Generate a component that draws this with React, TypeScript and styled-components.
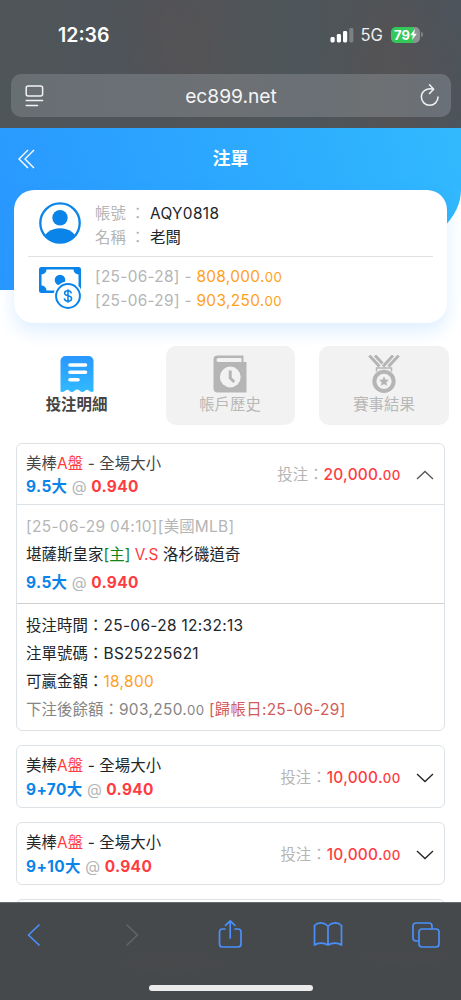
import React from 'react';
import styled, { createGlobalStyle } from 'styled-components';

const Global = createGlobalStyle`
  *, *::before, *::after { box-sizing: border-box; }
  body {
    margin: 0;
    background: #fff;
    color: #212529;
    font-family: Inter, "Noto Sans CJK TC", sans-serif;
    font-size: 15.4px;
  }
  svg { display: block; flex: none; }
`;

const Screen = styled.div`
  width: 461px;
  height: 1000px;
  display: flex;
  flex-direction: column;
  overflow: hidden;
`;

const BrowserTop = styled.header`
  height: 128px;
  flex: none;
  color: #fff;
  background:
    radial-gradient(circle at 165px 15px, #57525480, transparent 70px),
    radial-gradient(circle at 175px 60px, #57525480, transparent 60px),
    radial-gradient(circle at 400px 75px, #57525480, transparent 80px),
    linear-gradient(90deg, #4f5658, #4e545a 30%, #525457 45%, #4d565a 65%, #525356 85%, #4c545c);
`;

const StatusBar = styled.div`
  height: 74px;
  padding: 0 38px 5px 58px;
  display: flex;
  align-items: center;
`;

const Clock = styled.span`
  flex: 1;
  font-size: 19.5px;
  font-weight: 600;
  line-height: 24px;
`;

const Signal = styled.div`
  display: flex;
  align-items: center;
`;

const Network = styled.span`
  font-size: 16.6px;
  line-height: 22px;
  margin: 0 8px 0 7px;
  color: #eeeff0;
`;

const Battery = styled.div`
  width: 29px;
  height: 16px;
  border-radius: 5px;
  display: flex;
  align-items: center;
  justify-content: center;
  font-size: 13px;
  font-weight: 700;
  background: linear-gradient(90deg, #34c759 80%, #8d9194 80%);
`;

const BatteryTip = styled.i`
  width: 2px;
  height: 5px;
  margin-left: 1px;
  border-radius: 0 2px 2px 0;
  background: #7e8386;
`;

const AddressBar = styled.div`
  height: 43px;
  margin: 0 10px 0 11px;
  padding: 0 11px 0 14px;
  display: flex;
  align-items: center;
  justify-content: space-between;
  border-radius: 10px;
  background: linear-gradient(90deg, #686f73, #6a7075 30%, #6e7073 50%, #697076 68%, #6e7072 82%, #6a7078);
`;

const Address = styled.span`
  font-size: 19.2px;
  line-height: 24px;
  margin-right: 2px;
  color: #f4f5f5;
`;

const Page = styled.main`
  height: 774px;
  flex: none;
  overflow: hidden;
`;

const Hero = styled.div`
  height: 162px;
  border-bottom-right-radius: 240px 100px;
  background: linear-gradient(75deg, #2997ff, #2ca8ff 50%, #31b9fd);
`;

const TitleBar = styled.div`
  height: 62px;
  padding: 0 18px;
  display: grid;
  grid-template-columns: 24px 1fr 24px;
  align-items: center;
  color: #fff;
`;

const Title = styled.h1`
  margin: 0;
  text-align: center;
  font-size: 18px;
  font-weight: 700;
  line-height: 24px;
`;

const AccountCard = styled.section`
  height: 133px;
  margin: -100px 14px 0 14px;
  padding: 0 14px;
  position: relative;
  border-radius: 20px;
  background: #fff;
  box-shadow: 0 8px 18px #2598ff28;
`;

const AccountRow = styled.div<{ $height: number }>`
  height: ${p => p.$height}px;
  padding-left: 11px;
  display: flex;
  align-items: center;
  gap: 14px;
  & + & { border-top: 1px solid #dee2e2; }
`;

const AccountLines = styled.div`
  padding-top: 5px;
  line-height: 23.5px;
  color: #212529;
`;

const BalanceLines = styled(AccountLines)`
  padding-top: 2px;
  letter-spacing: 0.3px;
`;

const Muted = styled.span`
  color: #b5b5b5;
`;

const Latin = styled.span`
  letter-spacing: 0.35px;
`;

const AccountField = styled.div`
  display: grid;
  grid-template-columns: 35px 20px auto;
`;

const Gold = styled(Latin)`
  color: #ff9f1a;
`;

const Cents = styled.small`
  font-size: 0.86em;
`;

const Tabs = styled.nav`
  display: grid;
  grid-template-columns: 129px 129px 130px;
  gap: 24.5px;
  padding: 23px 12px 0;
`;

const Tab = styled.div<{ $active?: boolean }>`
  height: 79px;
  padding-top: 9px;
  display: flex;
  flex-direction: column;
  align-items: center;
  border-radius: 10px;
  line-height: 24px;
  font-weight: ${p => (p.$active ? 700 : 400)};
  color: ${p => (p.$active ? '#444' : '#b8b8b8')};
  background: ${p => (p.$active ? 'transparent' : '#f2f2f2')};
`;

const BetList = styled.div`
  padding: 18px 16px 0;
  display: flex;
  flex-direction: column;
  gap: 14px;
`;

const BetCard = styled.article`
  flex: none;
  min-height: 63px;
  border: 1px solid #dde2e6;
  border-radius: 6px;
  background: #fff;
`;

const BetHeader = styled.div<{ $open?: boolean }>`
  height: ${p => (p.$open ? 60 : 61)}px;
  padding: 2px 10px 0 9px;
  display: flex;
  align-items: center;
  justify-content: space-between;
  color: ${p => (p.$open ? '#444' : '#212529')};
`;

const BetName = styled.div`
  line-height: 23.5px;
  letter-spacing: 0.1px;
`;

const Stake = styled.div`
  display: flex;
  align-items: center;
  line-height: 24px;
  svg { margin-left: 15.5px; }
`;

const Amount = styled(Latin)`
  color: #ff3b3f;
  font-weight: 500;
  letter-spacing: 0.28px;
`;

const Red = styled.span`
  color: #ff3b3f;
`;

const Green = styled.span`
  color: #148414;
`;

const Rose = styled.span`
  color: #d25b5b;
  letter-spacing: 0.3px;
`;

const Pick = styled.b`
  color: #0a84e8;
  font-weight: 700;
  letter-spacing: 0.4px;
`;

const Odds = styled.b`
  color: #ff3b3f;
  font-weight: 700;
  letter-spacing: 0.35px;
`;

const Section = styled.div<{ $divider: string; $top: number; $bottom: number }>`
  padding: ${p => p.$top}px 9px ${p => p.$bottom}px;
  border-top: 1px solid ${p => p.$divider};
  line-height: 28px;
  letter-spacing: 0.1px;
  white-space: nowrap;
`;

const Gray = styled.div`
  color: #858585;
`;

const BrowserBottom = styled.footer`
  flex: 1;
  padding-top: 15px;
  border-top: 1px solid #6a6d6f;
  background:
    radial-gradient(ellipse at 170px 60px, #4b484a90, transparent 80px),
    radial-gradient(ellipse at 405px 55px, #4b484a90, transparent 70px),
    #45494c;
`;

const Toolbar = styled.div`
  height: 34px;
  padding: 0 20px 0 19px;
  display: flex;
  align-items: center;
  justify-content: space-between;
`;

const HomeIndicator = styled.div`
  width: 164px;
  height: 6px;
  margin: 33px auto 0;
  border-radius: 3px;
  background: #ececec;
`;

const ReaderIcon = () => (
  <svg width="19" height="22" viewBox="0 0 19 22" fill="none" stroke="#f2f2f2" strokeWidth="1.5" strokeLinecap="round">
    <rect x="1.2" y="1" width="16.4" height="10" rx="2" />
    <path d="M1.2 15.5H17.6M1.2 20.5H12.5" />
  </svg>
);

const ReloadIcon = () => (
  <svg width="20" height="24" viewBox="0 0 20 24" fill="none" stroke="#f2f2f2" strokeWidth="1.5" strokeLinecap="round" strokeLinejoin="round">
    <path d="M13.300 5.200C6.500 3.400 1.400 7.600 1.400 13a8.300 8.300 0 0 0 16.600 0M9.500.8l4.200 4.500-4.200 4.200" />
  </svg>
);

const SignalIcon = () => (
  <svg width="24" height="16" viewBox="0 0 24 16" fill="#fff">
    <rect x="0.5" y="10" width="4.2" height="5.5" rx="1.4" />
    <rect x="6.8" y="7" width="4.2" height="8.5" rx="1.4" />
    <rect x="13" y="4" width="4.2" height="11.5" rx="1.4" />
    <rect x="19.2" y="1" width="4.2" height="14.5" rx="1.4" fill="#7c8082" />
  </svg>
);

const BoltIcon = () => (
  <svg width="7" height="11" viewBox="0 0 7 11" fill="#fff">
    <path d="M5 0 .2 6.2h2.7L2 11l4.8-6.3H4.100z" />
  </svg>
);

const BackIcon = () => (
  <svg width="18" height="20" viewBox="0 0 18 20" fill="none" stroke="#fff" strokeWidth="1.4">
    <path d="M10 1 1 10l9 9M16 1 7 10l9 9" />
  </svg>
);

const PersonIcon = () => (
  <svg width="42" height="42" viewBox="0 0 42 42">
    <defs>
      <clipPath id="avatar"><circle cx="21" cy="21" r="20" /></clipPath>
    </defs>
    <circle cx="21" cy="15.700" r="7.700" fill="#0a84e8" />
    <ellipse cx="21" cy="38.500" rx="16.500" ry="12.300" fill="#0a84e8" clipPath="url(#avatar)" />
    <circle cx="21" cy="21" r="19.700" fill="none" stroke="#0a84e8" strokeWidth="2.300" />
  </svg>
);

const MoneyIcon = () => (
  <svg width="42" height="42" viewBox="0 0 42 42">
    <rect width="42" height="26" rx="2.500" fill="#0a84e8" />
    <path d="M7.500 2.500h27a5 5 0 0 0 5 5v11a5 5 0 0 0-5 5h-27a5 5 0 0 0-5-5v-11a5 5 0 0 0 5-5z" fill="#fff" />
    <circle cx="21" cy="13" r="5.300" fill="#0a84e8" />
    <circle cx="29" cy="29" r="14.500" fill="#fff" />
    <circle cx="29" cy="29" r="11.900" fill="#fff" stroke="#0a84e8" strokeWidth="2" />
    <path d="M32.300 26.300c-.3-1.700-1.600-2.500-3.400-2.500-2 0-3.300 1-3.300 2.500 0 3.600 7 1.500 7 5.200 0 1.700-1.500 2.700-3.500 2.700-2.200 0-3.600-1-3.800-2.800M29 22.300v13.400" fill="none" stroke="#0a84e8" strokeWidth="1.500" />
  </svg>
);

const ReceiptIcon = () => (
  <svg width="34" height="38" viewBox="0 0 34 38">
    <defs>
      <linearGradient id="receipt" x2="0" y2="1">
        <stop stopColor="#2997ff" />
        <stop offset="1" stopColor="#31baff" />
      </linearGradient>
    </defs>
    <path d="M5.500 1h23a5 5 0 0 1 5 5v30.500c-2 .8-3.500.3-4.700-1-1.400-1.200-2.800-.8-4 .4-1.500 1.500-3.400 1.500-4.800 0-1.900-1.800-3.900-1.800-5.700 0-1.500 1.500-3.300 1.500-4.800 0-1.200-1.200-2.600-1.600-4-.4-1.200 1.300-3 1.800-5 1V6a5 5 0 0 1 5-5z" fill="url(#receipt)" />
    <path d="M10 10h15.500M10 17.300h15.500M10 24.700h8" stroke="#fff" strokeWidth="3.600" strokeLinecap="round" />
  </svg>
);

const HistoryIcon = () => (
  <svg width="34" height="38" viewBox="0 0 34 38">
    <path d="M4.500.5h26V7H33.500v30.500H4A4 4 0 0 1 .5 33.500V4.500a4 4 0 0 1 4-4z" fill="#b5b5b5" />
    <path d="M5.500 3h23v4h-23a2 2 0 0 1 0-4z" fill="#f2f2f2" />
    <circle cx="17.300" cy="22" r="10.400" fill="#f2f2f2" />
    <path d="M17.200 15.500v7.500l4 4" fill="none" stroke="#b5b5b5" strokeWidth="3" />
  </svg>
);

const MedalIcon = () => (
  <svg width="34" height="38" viewBox="0 0 34 38" fill="none" stroke="#b5b5b5">
    <path d="M2.300.5 12.500 11.500M8 .5l7.500 8M31.700.5 21.500 11.500M26 .5 16 11.500" strokeWidth="3" />
    <path d="M9.500 16.500v-3.500h15v3.500" strokeWidth="1.500" />
    <circle cx="17" cy="26.300" r="9.600" strokeWidth="4" />
    <path d="m17 21.200 1.500 3.200 3.500.4-2.600 2.400.7 3.500-3.100-1.700-3.100 1.700.7-3.500-2.600-2.400 3.500-.4z" fill="#b5b5b5" stroke="none" />
  </svg>
);

const Caret = ({ up }: { up?: boolean }) => (
  <svg width="18" height="10" viewBox="0 0 18 10" fill="none" stroke={up ? '#555' : '#222'} strokeWidth="1.300">
    <path d={up ? 'M1 9l8-7.500L17 9' : 'M1 1l8 7.500L17 1'} />
  </svg>
);

const ToolIcon = ({ d, color = '#4a90fb' }: { d: string; color?: string }) => (
  <svg width="30" height="34" viewBox="0 0 30 34" fill="none" stroke={color} strokeWidth="1.700" strokeLinecap="round" strokeLinejoin="round">
    <path d={d} />
  </svg>
);

const PickLine = ({ pick, odds }: { pick: string; odds: string }) => (
  <div>
    <Pick>{pick}</Pick> <Muted>@</Muted> <Odds>{odds}</Odds>
  </div>
);

type HeaderProps = { pick: string; stake: string; open?: boolean };

const Header = ({ pick, stake, open }: HeaderProps) => (
  <BetHeader $open={open}>
    <BetName>
      <div>美棒<Red>A盤</Red> - 全場大小</div>
      <PickLine pick={pick} odds="0.940" />
    </BetName>
    <Stake>
      <Muted>投注：</Muted>
      <Amount>{stake}.<Cents>00</Cents></Amount>
      <Caret up={open} />
    </Stake>
  </BetHeader>
);

export default function App() {
  return (
    <Screen>
      <Global />
      <BrowserTop>
        <StatusBar>
          <Clock>12:36</Clock>
          <Signal>
            <SignalIcon />
            <Network>5G</Network>
            <Battery>79<BoltIcon /></Battery>
            <BatteryTip />
          </Signal>
        </StatusBar>
        <AddressBar>
          <ReaderIcon />
          <Address>ec899.net</Address>
          <ReloadIcon />
        </AddressBar>
      </BrowserTop>
      <Page>
        <Hero>
          <TitleBar>
            <BackIcon />
            <Title>注單</Title>
          </TitleBar>
        </Hero>
        <AccountCard>
          <AccountRow $height={66}>
            <PersonIcon />
            <AccountLines>
              <AccountField><Muted>帳號</Muted><Muted>：</Muted><Latin>AQY0818</Latin></AccountField>
              <AccountField><Muted>名稱</Muted><Muted>：</Muted><span>老闆</span></AccountField>
            </AccountLines>
          </AccountRow>
          <AccountRow $height={63}>
            <MoneyIcon />
            <BalanceLines>
              <div><Muted>[25-06-28] - </Muted><Gold>808,000.<Cents>00</Cents></Gold></div>
              <div><Muted>[25-06-29] - </Muted><Gold>903,250.<Cents>00</Cents></Gold></div>
            </BalanceLines>
          </AccountRow>
        </AccountCard>
        <Tabs>
          <Tab $active><ReceiptIcon />投注明細</Tab>
          <Tab><HistoryIcon />帳戶歷史</Tab>
          <Tab><MedalIcon />賽事結果</Tab>
        </Tabs>
        <BetList>
          <BetCard>
            <Header pick="9.5大" stake="20,000" open />
            <Section $divider="#dde2e6" $top={8} $bottom={6}>
              <Muted><Latin>[25-06-29 04:10][</Latin>美國<Latin>MLB]</Latin></Muted>
              <div>堪薩斯皇家<Green>[主]</Green> <Red>V.S</Red> 洛杉磯道奇</div>
              <PickLine pick="9.5大" odds="0.940" />
            </Section>
            <Section $divider="#cfcfcf" $top={8} $bottom={6}>
              <div>投注時間：<Latin>25-06-28 12:32:13</Latin></div>
              <div>注單號碼：<Latin>BS25225621</Latin></div>
              <div>可贏金額：<Gold>18,800</Gold></div>
              <Gray>下注後餘額：<Latin>903,250.<Cents>00</Cents></Latin> <Rose>[歸帳日:25-06-29]</Rose></Gray>
            </Section>
          </BetCard>
          <BetCard><Header pick="9+70大" stake="10,000" /></BetCard>
          <BetCard><Header pick="9+10大" stake="10,000" /></BetCard>
          <BetCard />
        </BetList>
      </Page>
      <BrowserBottom>
        <Toolbar>
          <ToolIcon d="M20 7 9.500 17l10.500 10" />
          <ToolIcon d="M10 7l10.500 10-10.500 10" color="#606468" />
          <ToolIcon d="M10 11H7.500Q4.500 11 4.500 14V26Q4.500 29 7.500 29H23Q26 29 26 26V14Q26 11 23 11H20M15.200 20V3M10.500 7.300l4.700-4.500 4.700 4.500" />
          <ToolIcon d="M15 27V8M15 8C11 4 5 4 1.500 7.500V27C5 24.500 11 24.500 15 27 19 24.500 25 24.500 28.500 27V7.500C25 4 19 4 15 8" />
          <ToolIcon d="M8 23H5Q2 23 2 20V8Q2 5 5 5H18Q21 5 21 8V10M11 11H25Q28 11 28 14V26Q28 29 25 29H11Q8 29 8 26V14Q8 11 11 11" />
        </Toolbar>
        <HomeIndicator />
      </BrowserBottom>
    </Screen>
  );
}
